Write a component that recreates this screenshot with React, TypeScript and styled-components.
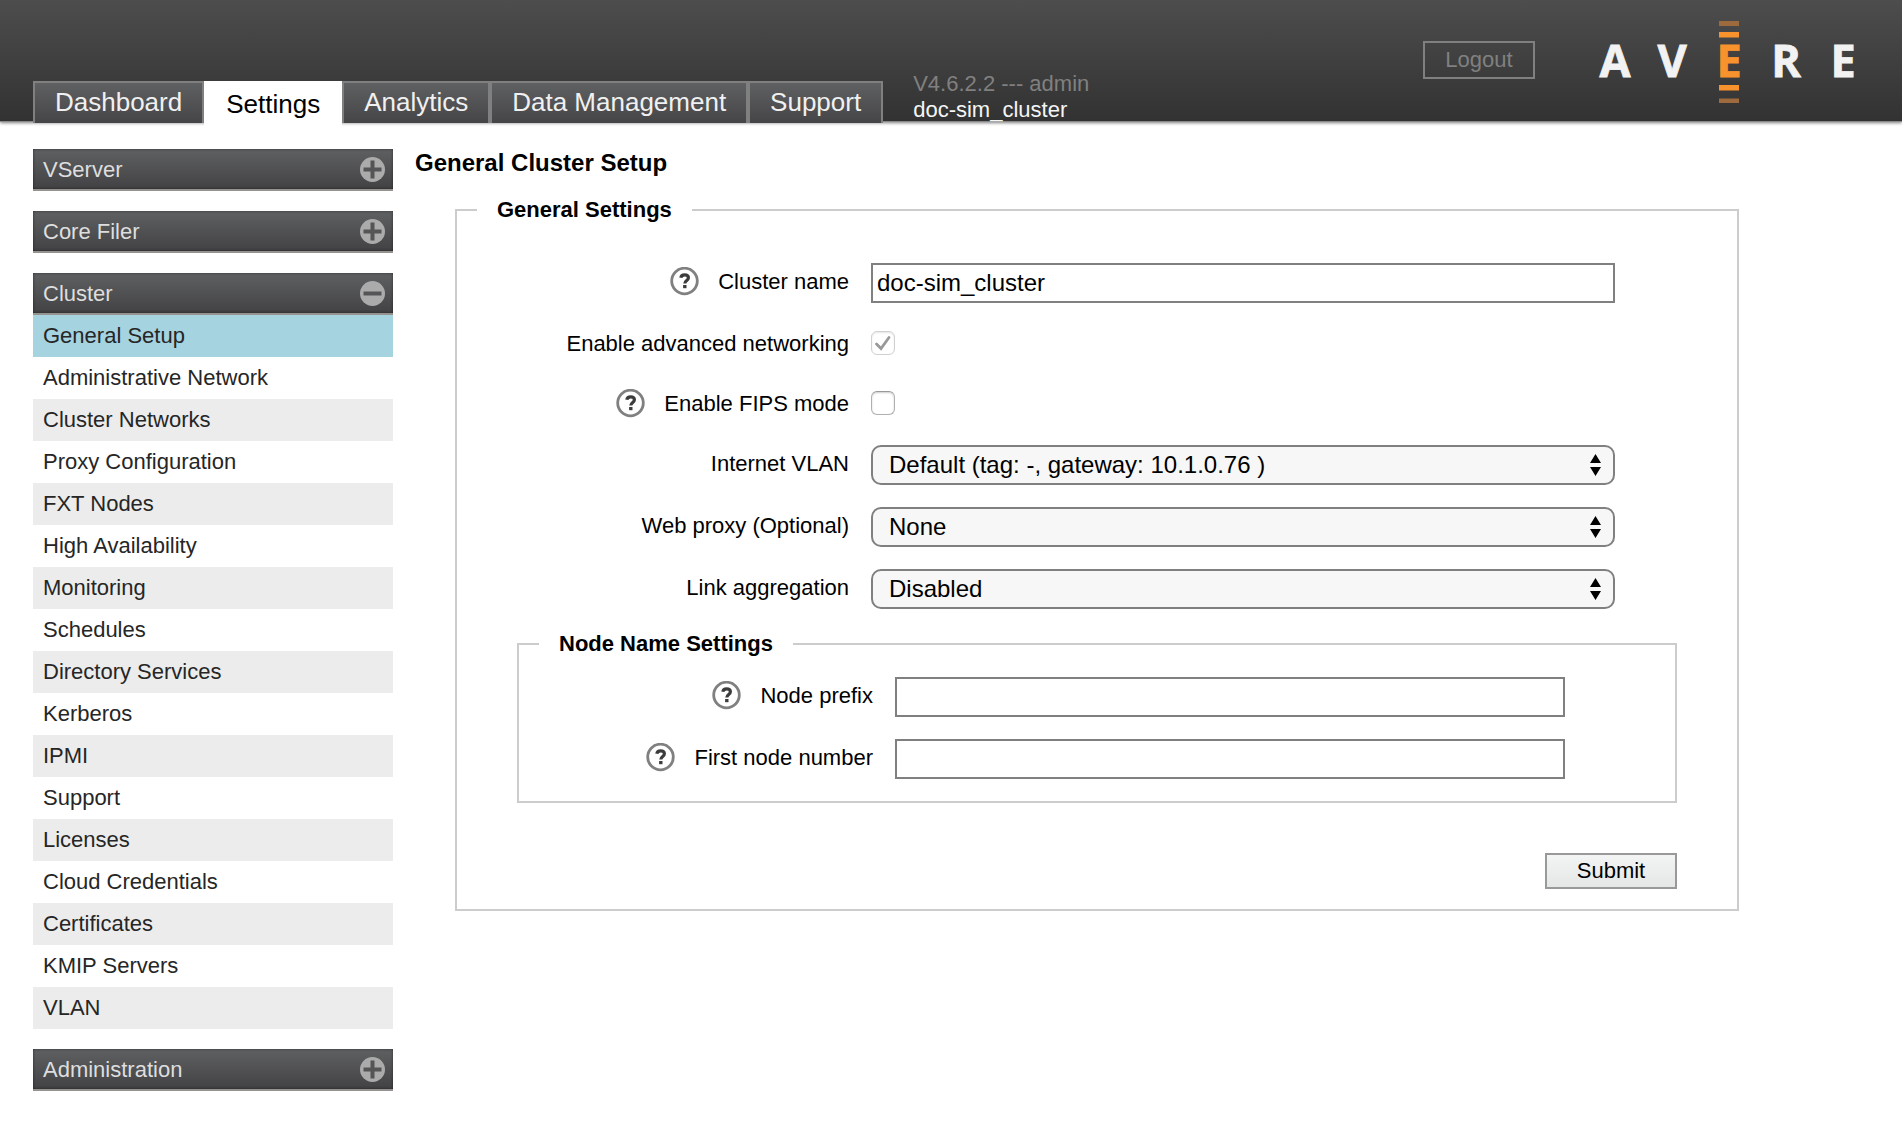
import React, { useId, useState } from "react";
import styled, { createGlobalStyle, css } from "styled-components";

const GlobalStyle = createGlobalStyle`
  *, *::before, *::after { box-sizing: border-box; }
  body {
    margin: 0;
    background: #fff;
    color: #000;
    font-family: "Liberation Sans", Arial, Helvetica, sans-serif;
    font-size: 22px;
  }
  button, input, select { font-family: inherit; margin: 0; }
`;

/* ---------- header ---------- */

const Header = styled.header`
  display: flex;
  height: 121px;
  padding: 0 31px 0 33px;
  background: linear-gradient(#4d4d4d, #323232);
  box-shadow: 0 1px 0 #8a8a8a, 0 2px 3px rgba(0, 0, 0, 0.5);
`;

const Tabs = styled.nav`
  display: flex;
  align-self: flex-end;
  height: 42px;
  margin-bottom: -2px;
`;

const Tab = styled.a<{ $active?: boolean }>`
  padding: 0 20px;
  border: 2px solid #808080;
  border-bottom: 0;
  background: linear-gradient(#5f6062, #454547);
  color: #f0f0f0;
  font-size: 26px;
  line-height: 38px;
  text-decoration: none;
  white-space: nowrap;
  ${(p) =>
    p.$active &&
    css`
      height: 46px;
      border-color: #fff;
      background: #fff;
      color: #000;
      line-height: 42px;
    `}
`;

const Session = styled.div`
  align-self: flex-end;
  margin: 0 auto -2px 30px;
  line-height: 26px;
  white-space: nowrap;
`;

const Version = styled.div`
  color: #808080;
`;

const ClusterName = styled.div`
  color: #f5f5f5;
`;

const Logout = styled.button`
  width: 112px;
  height: 38px;
  margin: 41px 51px 0 20px;
  padding: 0;
  border: 2px solid #808080;
  background: transparent;
  color: #808080;
  font-size: 22px;
  line-height: 32px;
`;

const LogoArt = styled.svg`
  flex: none;
  width: 285px;
  height: 84px;
  margin-top: 20px;
  font: 700 45px "Open Sans", sans-serif;
`;

const letters = ["A", "V", "E", "R", "E"];

function Logo() {
  return (
    <LogoArt viewBox="0 0 285 84" role="img" aria-label="Avere">
      <rect x="133" y="1" width="20" height="5" fill="#9c6a3c" />
      <rect x="133" y="12" width="20" height="5.5" fill="#f7922d" />
      <rect x="133" y="65" width="20" height="5.5" fill="#f7922d" />
      <rect x="133" y="78.5" width="20" height="4.5" fill="#9c6a3c" />
      {letters.map((letter, i) => (
        <text
          key={i}
          x={29 + i * 57}
          y="57"
          textAnchor="middle"
          fill={i === 2 ? "#f7922d" : "#f2f2f2"}
          stroke={i === 2 ? "#f7922d" : "#f2f2f2"}
          strokeWidth="0.8"
        >
          {letter}
        </text>
      ))}
    </LogoArt>
  );
}

/* ---------- sidebar ---------- */

const Page = styled.div`
  display: flex;
  align-items: flex-start;
  gap: 22px;
  padding: 28px 163px 30px 33px;
`;

const Sidebar = styled.aside`
  display: flex;
  flex: none;
  flex-direction: column;
  gap: 20px;
  width: 360px;
`;

const GroupHeader = styled.button`
  display: flex;
  align-items: center;
  justify-content: space-between;
  width: 100%;
  height: 42px;
  padding: 0 7px 0 10px;
  border: 0;
  border-bottom: 2px solid #959290;
  background: linear-gradient(#5f6062, #424244);
  box-shadow: inset 0 0 3px rgba(0, 0, 0, 0.5);
  color: #dedede;
  font-size: 22px;
`;

const GroupTitle = styled.span`
  padding-top: 2px;
  line-height: 38px;
`;

const MenuList = styled.ul`
  margin: 0;
  padding: 0;
  list-style: none;
`;

const MenuItem = styled.li<{ $current: boolean }>`
  background: #fff;
  &:nth-child(odd) {
    background: #ececec;
  }
  ${(p) =>
    p.$current &&
    css`
      &&:nth-child(n) {
        background: #a5d3e0;
      }
    `}
`;

const MenuLink = styled.a`
  display: block;
  padding: 0 10px;
  color: #262626;
  line-height: 42px;
  text-decoration: none;
`;

function ToggleIcon({ open }: { open: boolean }) {
  return (
    <svg width="27" height="27" viewBox="0 0 27 27" aria-hidden="true">
      <circle cx="13.5" cy="13.5" r="12.5" fill="#ababab" />
      <path
        d={open ? "M4.5 13.5h18" : "M4.5 13.5h18M13.5 4.5v18"}
        stroke="#555557"
        strokeWidth="4"
      />
    </svg>
  );
}

const clusterPages = [
  "General Setup",
  "Administrative Network",
  "Cluster Networks",
  "Proxy Configuration",
  "FXT Nodes",
  "High Availability",
  "Monitoring",
  "Schedules",
  "Directory Services",
  "Kerberos",
  "IPMI",
  "Support",
  "Licenses",
  "Cloud Credentials",
  "Certificates",
  "KMIP Servers",
  "VLAN",
];

function MenuGroup({ title, pages }: { title: string; pages?: string[] }) {
  const open = Boolean(pages);
  return (
    <section>
      <GroupHeader type="button" aria-expanded={open}>
        <GroupTitle>{title}</GroupTitle>
        <ToggleIcon open={open} />
      </GroupHeader>
      {pages && (
        <MenuList>
          {pages.map((page, i) => (
            <MenuItem key={page} $current={i === 0}>
              <MenuLink href="#" aria-current={i === 0 ? "page" : undefined}>
                {page}
              </MenuLink>
            </MenuItem>
          ))}
        </MenuList>
      )}
    </section>
  );
}

/* ---------- form ---------- */

const Main = styled.main`
  flex: 1;
  min-width: 0;
`;

const Title = styled.h1`
  margin: 0 0 20px;
  font-size: 24px;
  line-height: 28px;
`;

const Fieldset = styled.fieldset<{ $nested?: boolean }>`
  min-width: 0;
  margin: ${(p) => (p.$nested ? "0" : "0 0 0 40px")};
  padding: ${(p) => (p.$nested ? "20px 110px 22px 0" : "40px 60px 20px")};
  border: 2px solid #ccc;
`;

const Legend = styled.legend<{ $nested?: boolean }>`
  margin-left: ${(p) => (p.$nested ? "20px" : "-40px")};
  padding: 0 20px;
  font-weight: 700;
  line-height: 26px;
`;

const Fields = styled.div<{ $nested?: boolean }>`
  display: flex;
  flex-direction: column;
  gap: 22px;
  padding: ${(p) => (p.$nested ? "0" : "0 62px 22px 0")};
`;

const Row = styled.div<{ $nested?: boolean }>`
  display: grid;
  grid-template-columns: ${(p) => (p.$nested ? 354 : 332)}px 1fr;
  align-items: start;
  gap: 22px;
`;

const LabelCell = styled.div`
  display: flex;
  align-items: flex-start;
  justify-content: flex-end;
  gap: 19px;
  line-height: 38px;
  white-space: nowrap;
`;

const HelpButton = styled.button`
  display: flex;
  padding: 4px 0 0;
  border: 0;
  background: none;
`;

const TextInput = styled.input`
  width: 100%;
  height: 40px;
  padding: 0 4px;
  border: 2px solid #808080;
  background: #fff;
  color: #000;
  font-size: 24px;
`;

const checkMark =
  "url(\"data:image/svg+xml,%3Csvg xmlns='http://www.w3.org/2000/svg' viewBox='0 0 22 22'%3E%3Cpath d='M4.5 12L9 16.5L17 5.5' fill='none' stroke='%23999' stroke-width='2.8' stroke-linecap='round'/%3E%3C/svg%3E\")";

const Checkbox = styled.input`
  display: block;
  appearance: none;
  width: 24px;
  height: 24px;
  margin: 6px 0 8px;
  border: 1px solid #b0b0b0;
  border-top-color: #999;
  border-radius: 6px;
  background: #fff;
  box-shadow: inset 0 1px 2px rgba(0, 0, 0, 0.2);
  &:checked {
    background: #fff ${checkMark} center / 22px 22px no-repeat;
  }
  &:disabled {
    border-color: #d0d0d0;
    box-shadow: inset 0 1px 2px rgba(0, 0, 0, 0.1);
  }
`;

const SelectWrap = styled.div`
  position: relative;
`;

const SelectBox = styled.select`
  display: block;
  appearance: none;
  width: 100%;
  height: 40px;
  padding: 0 40px 2px 16px;
  border: 2px solid #808080;
  border-radius: 10px;
  background: #f7f7f7;
  color: #000;
  font-size: 24px;
`;

const SelectArrows = styled.svg`
  position: absolute;
  top: 9px;
  right: 14px;
  pointer-events: none;
`;

const Actions = styled.div`
  display: flex;
  justify-content: flex-end;
  padding-top: 50px;
`;

const Submit = styled.button`
  width: 132px;
  height: 36px;
  padding: 0;
  border: 2px solid #999;
  background: linear-gradient(#f3f4f4, #e5e7e7);
  color: #000;
  font-size: 22px;
  line-height: 32px;
`;

function HelpIcon() {
  return (
    <svg width="29" height="29" viewBox="0 0 29 29" aria-hidden="true">
      <circle cx="14.5" cy="14" r="12.8" fill="#fff" stroke="#808080" strokeWidth="2.8" />
      <path
        d="M10.8 10.8C11.1 8.8 12.5 7.8 14.6 7.8C17 7.8 18.4 9 18.4 10.8C18.4 13.6 14.8 13.4 14.8 16.6"
        fill="none"
        stroke="#3c3c3c"
        strokeWidth="3.2"
      />
      <rect x="13.100" y="18" width="3.4" height="3.2" fill="#3c3c3c" />
    </svg>
  );
}

type FieldProps = {
  label: string;
  help?: boolean;
  nested?: boolean;
  children: (id: string) => React.ReactNode;
};

function Field({ label, help, nested, children }: FieldProps) {
  const id = useId();
  return (
    <Row $nested={nested}>
      <LabelCell>
        {help && (
          <HelpButton type="button" aria-label={`Help: ${label}`}>
            <HelpIcon />
          </HelpButton>
        )}
        <label htmlFor={id}>{label}</label>
      </LabelCell>
      {children(id)}
    </Row>
  );
}

function Select({ id, option }: { id: string; option: string }) {
  return (
    <SelectWrap>
      <SelectBox id={id}>
        <option>{option}</option>
      </SelectBox>
      <SelectArrows width="11" height="22" viewBox="0 0 11 22" aria-hidden="true">
        <path d="M5.5 0L11 9H0zM5.5 22L11 13H0z" />
      </SelectArrows>
    </SelectWrap>
  );
}

const tabs = ["Dashboard", "Settings", "Analytics", "Data Management", "Support"];

export default function App() {
  const [name, setName] = useState("doc-sim_cluster");
  const [fips, setFips] = useState(false);

  return (
    <>
      <GlobalStyle />
      <Header>
        <Tabs>
          {tabs.map((tab) => (
            <Tab key={tab} href="#" $active={tab === "Settings"}>
              {tab}
            </Tab>
          ))}
        </Tabs>
        <Session>
          <Version>V4.6.2.2 --- admin</Version>
          <ClusterName>doc-sim_cluster</ClusterName>
        </Session>
        <Logout type="button">Logout</Logout>
        <Logo />
      </Header>
      <Page>
        <Sidebar>
          <MenuGroup title="VServer" />
          <MenuGroup title="Core Filer" />
          <MenuGroup title="Cluster" pages={clusterPages} />
          <MenuGroup title="Administration" />
        </Sidebar>
        <Main>
          <Title>General Cluster Setup</Title>
          <form onSubmit={(e) => e.preventDefault()}>
            <Fieldset>
              <Legend>General Settings</Legend>
              <Fields>
                <Field label="Cluster name" help>
                  {(id) => (
                    <TextInput id={id} value={name} onChange={(e) => setName(e.target.value)} />
                  )}
                </Field>
                <Field label="Enable advanced networking">
                  {(id) => <Checkbox id={id} type="checkbox" checked disabled readOnly />}
                </Field>
                <Field label="Enable FIPS mode" help>
                  {(id) => (
                    <Checkbox
                      id={id}
                      type="checkbox"
                      checked={fips}
                      onChange={(e) => setFips(e.target.checked)}
                    />
                  )}
                </Field>
                <Field label="Internet VLAN">
                  {(id) => <Select id={id} option="Default (tag: -, gateway: 10.1.0.76 )" />}
                </Field>
                <Field label="Web proxy (Optional)">
                  {(id) => <Select id={id} option="None" />}
                </Field>
                <Field label="Link aggregation">
                  {(id) => <Select id={id} option="Disabled" />}
                </Field>
              </Fields>
              <Fieldset $nested>
                <Legend $nested>Node Name Settings</Legend>
                <Fields $nested>
                  <Field label="Node prefix" help nested>
                    {(id) => <TextInput id={id} type="text" />}
                  </Field>
                  <Field label="First node number" help nested>
                    {(id) => <TextInput id={id} type="text" />}
                  </Field>
                </Fields>
              </Fieldset>
              <Actions>
                <Submit type="submit">Submit</Submit>
              </Actions>
            </Fieldset>
          </form>
        </Main>
      </Page>
    </>
  );
}
